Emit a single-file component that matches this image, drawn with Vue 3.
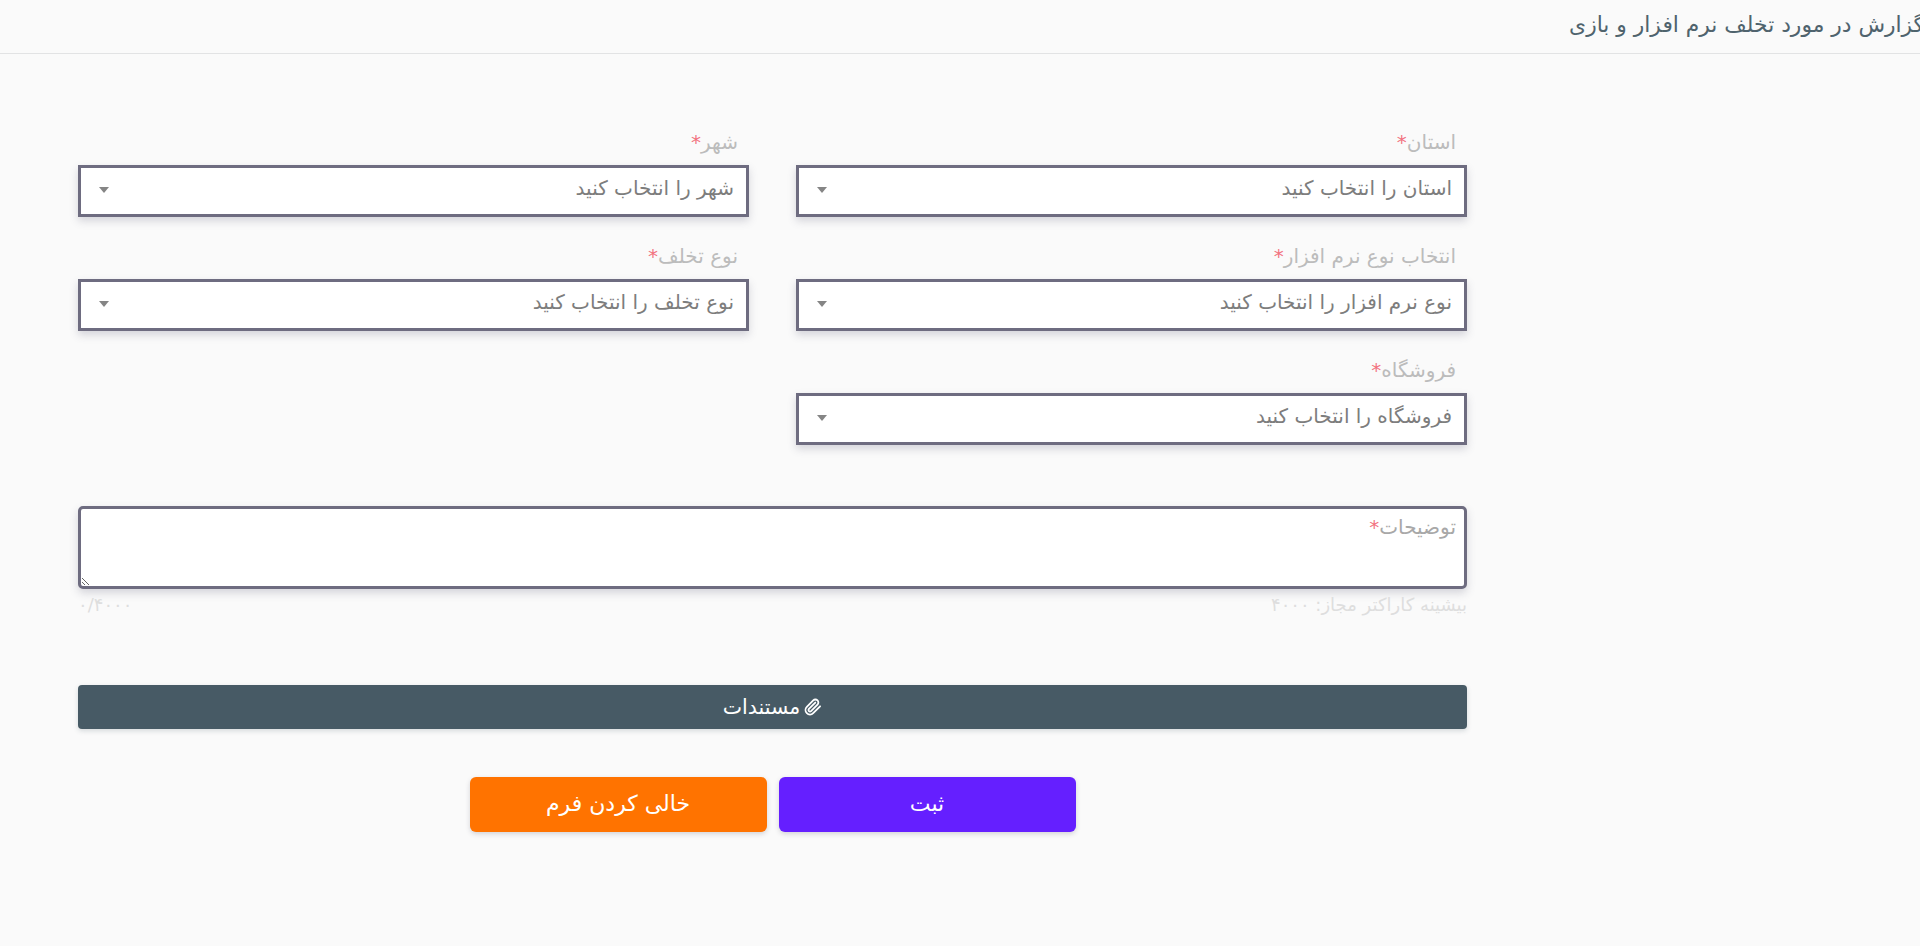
<template>
  <div class="page" dir="rtl">
    <header class="page-head">
      <h1 class="page-title">گزارش در مورد تخلف نرم افزار و بازی</h1>
    </header>

    <form class="report-form" @submit.prevent>
      <div class="fields">
        <div v-for="field in fields" :key="field.label" class="field">
          <label class="field-label">{{ field.label }}<span class="req">*</span></label>
          <div class="select-box">
            <span class="select-text">{{ field.placeholder }}</span>
            <span class="select-arrow"></span>
          </div>
        </div>
      </div>

      <div class="desc">
        <label class="desc-label">توضیحات<span class="req">*</span></label>
        <textarea v-model="description" class="desc-input" maxlength="4000"></textarea>
        <div class="desc-hints">
          <span>بیشینه کاراکتر مجاز: ۴۰۰۰</span>
          <span>۰/۴۰۰۰</span>
        </div>
      </div>

      <button type="button" class="docs-btn">
        <svg class="clip" viewBox="0 0 24 24" fill="none" stroke="currentColor" stroke-width="2.4" stroke-linecap="round" stroke-linejoin="round">
          <path d="m21.44 11.05-9.19 9.19a6 6 0 0 1-8.49-8.49l8.57-8.57A4 4 0 1 1 18 8.84l-8.59 8.57a2 2 0 0 1-2.83-2.83l8.49-8.48" />
        </svg>
        <span>مستندات</span>
      </button>

      <div class="actions">
        <button type="submit" class="btn btn-submit">ثبت</button>
        <button type="reset" class="btn btn-reset">خالی کردن فرم</button>
      </div>
    </form>
  </div>
</template>

<script setup>
import { ref } from 'vue';

const description = ref('');

const fields = [
  { label: 'استان', placeholder: 'استان را انتخاب کنید' },
  { label: 'شهر', placeholder: 'شهر را انتخاب کنید' },
  { label: 'انتخاب نوع نرم افزار', placeholder: 'نوع نرم افزار را انتخاب کنید' },
  { label: 'نوع تخلف', placeholder: 'نوع تخلف را انتخاب کنید' },
  { label: 'فروشگاه', placeholder: 'فروشگاه را انتخاب کنید' },
];
</script>

<style scoped>
.page {
  width: 1920px;
  height: 946px;
  overflow: hidden;
  background: #fafafa;
  font-family: "DejaVu Sans", sans-serif;
  color: #555;
}
.page-head {
  height: 53px;
  border-bottom: 1px solid #e2e3e4;
  overflow: hidden;
}
.page-title {
  margin: 0 -4px 0 0;
  font-size: 21.8px;
  font-weight: 400;
  line-height: 50px;
  color: #4f636d;
  white-space: nowrap;
}
.report-form {
  width: 1389px;
  margin-right: 453px;
  padding-top: 73px;
}
.fields {
  display: grid;
  grid-template-columns: 671px 671px;
  column-gap: 47px;
  row-gap: 24px;
}
.field-label {
  display: block;
  height: 38px;
  padding-right: 11px;
  font-size: 20px;
  line-height: 30px;
  color: #bcbcbc;
}
.req {
  color: #f2727f;
}
.select-box {
  display: flex;
  align-items: center;
  justify-content: space-between;
  height: 52px;
  box-sizing: border-box;
  padding: 0 12px 0 18px;
  background: #fff;
  border: 3px solid #6e6c80;
  box-shadow: 0 4px 8px rgba(80, 80, 110, 0.22);
}
.select-text {
  font-size: 20px;
  color: #7d7d7d;
  padding-bottom: 6px;
}
.select-arrow {
  width: 0;
  height: 0;
  border-left: 5px solid transparent;
  border-right: 5px solid transparent;
  border-top: 6px solid #858585;
  margin-bottom: 2px;
}
.desc {
  position: relative;
  margin-top: 61px;
}
.desc-label {
  position: absolute;
  top: 6px;
  right: 11px;
  font-size: 20px;
  line-height: 30px;
  color: #a8a8a8;
}
.desc-input {
  display: block;
  width: 100%;
  height: 83px;
  box-sizing: border-box;
  background: #fff;
  border: 3px solid #6e6c80;
  border-radius: 5px;
  outline: none;
  box-shadow: 0 4px 8px rgba(80, 80, 110, 0.22);
}
.desc-hints {
  display: flex;
  justify-content: space-between;
  margin-top: 6px;
  font-size: 18px;
  line-height: 20px;
  color: #dedede;
}
.docs-btn {
  display: flex;
  align-items: center;
  justify-content: center;
  gap: 4px;
  width: 100%;
  height: 44px;
  margin-top: 70px;
  border: none;
  border-radius: 4px;
  background: #475a65;
  color: #fff;
  font: 500 20.5px "DejaVu Sans", sans-serif;
  box-shadow: 0 2px 5px rgba(71, 90, 101, 0.2);
}
.clip {
  width: 18px;
  height: 18px;
}
.actions {
  display: flex;
  justify-content: center;
  gap: 12px;
  margin-top: 48px;
}
.btn {
  width: 297px;
  height: 55px;
  padding-bottom: 3px;
  border: none;
  border-radius: 6px;
  color: #fff;
  font: 500 22px "DejaVu Sans", sans-serif;
  box-shadow: 0 2px 5px rgba(60, 60, 80, 0.2);
}
.btn-submit {
  background: #651fff;
}
.btn-reset {
  background: #ff7300;
}
</style>
